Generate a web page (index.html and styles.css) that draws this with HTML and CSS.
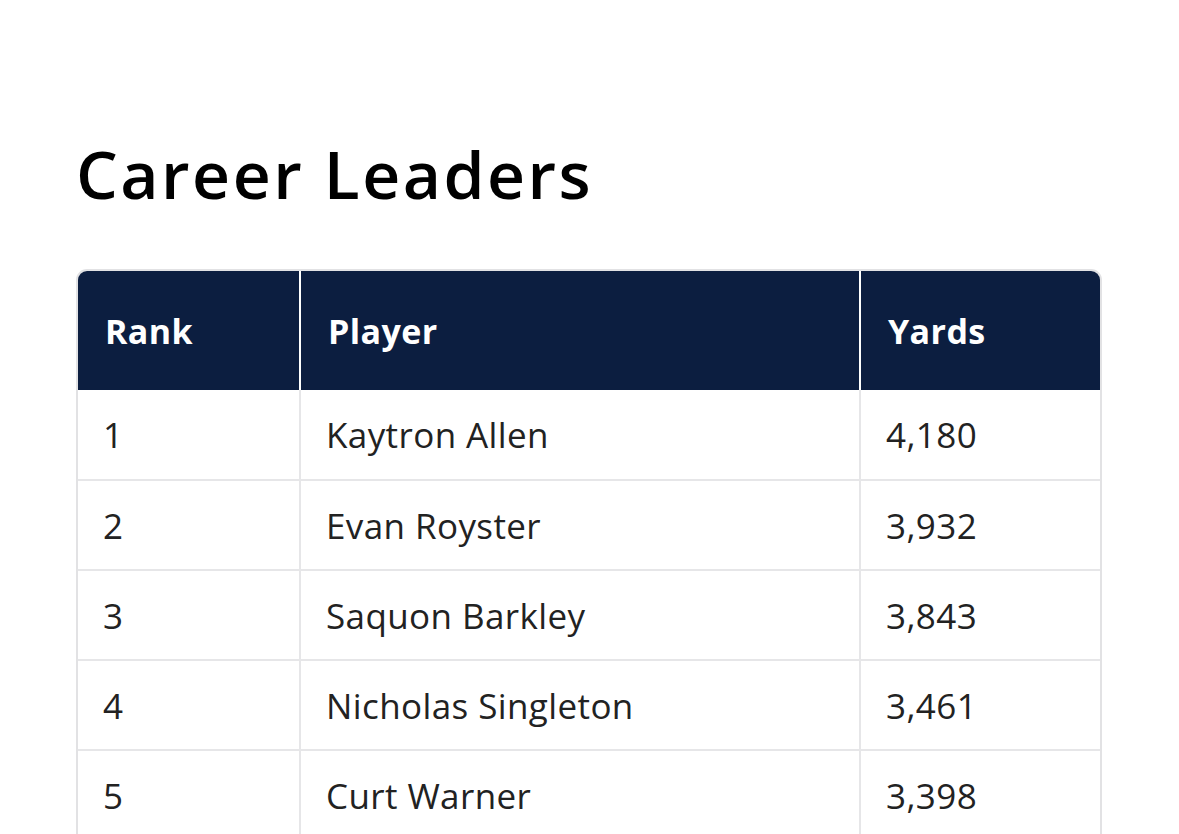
FILE: index.html
```html
<!DOCTYPE html>
<html>
<head>
<meta charset="utf-8">
<link rel="stylesheet" href="styles.css">
</head>
<body>
<main class="page">
  <h1 class="title">Career Leaders</h1>
  <div class="table-wrap">
    <table class="leaders">
      <thead>
        <tr><th class="c-rank">Rank</th><th class="c-player">Player</th><th class="c-yards">Yards</th></tr>
      </thead>
      <tbody>
        <tr><td>1</td><td>Kaytron Allen</td><td>4,180</td></tr>
        <tr><td>2</td><td>Evan Royster</td><td>3,932</td></tr>
        <tr><td>3</td><td>Saquon Barkley</td><td>3,843</td></tr>
        <tr><td>4</td><td>Nicholas Singleton</td><td>3,461</td></tr>
        <tr class="last"><td>5</td><td>Curt Warner</td><td>3,398</td></tr>
      </tbody>
    </table>
  </div>
</main>
</body>
</html>
```

FILE: styles.css
```css
html, body {
  margin: 0;
  padding: 0;
  background: #ffffff;
}
.page {
  padding: 128px 77px 0 76px;
}
.title {
  margin: 0 0 51px 0;
  font-family: "Open Sans", "Noto Sans", sans-serif;
  font-weight: 600;
  font-size: 66px;
  line-height: 90px;
  color: #000;
  letter-spacing: 2.5px;
}
.table-wrap {
  border: 2px solid #e2e2e4;
  border-radius: 11px;
  overflow: hidden;
  width: 1022px;
}
.leaders {
  width: 100%;
  border-collapse: collapse;
  font-family: "Open Sans", "Noto Sans", sans-serif;
  font-size: 35px;
  letter-spacing: 0.4px;
  color: #222;
}
.leaders th {
  background: #0c1e40;
  color: #fff;
  font-weight: 700;
  font-size: 34px;
  text-align: left;
  height: 119px;
  padding: 0 26px 0 27px;
  border-left: 2px solid #ffffff;
  box-sizing: border-box;
}
.leaders th:first-child { border-left: none; }
.c-rank { width: 222px; }
.c-player { width: 560px; }
.leaders td {
  height: 90px;
  padding: 0 26px 0 25px;
  border-left: 2px solid #e6e6e8;
  border-top: 2px solid #e6e6e8;
  box-sizing: border-box;
  font-weight: 400;
}
.leaders .last td {
  height: 100px;
  padding-bottom: 10px;
}
.leaders tbody tr:first-child td { border-top: none; }
.leaders td:first-child { border-left: none; }
```
